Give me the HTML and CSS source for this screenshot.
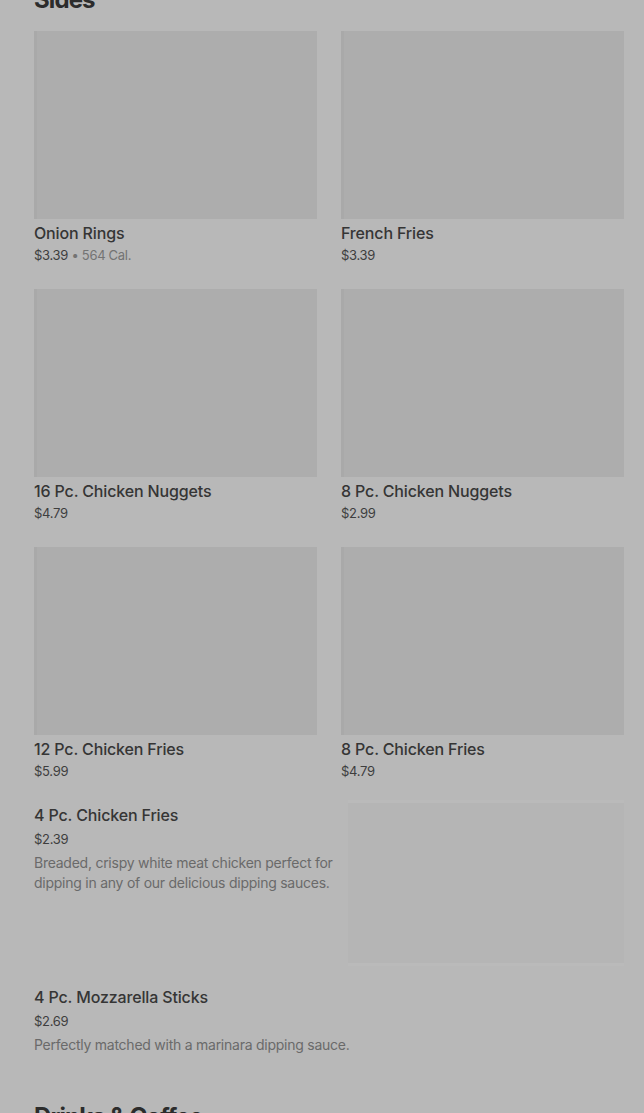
FILE: index.html
```html
<!DOCTYPE html>
<html>
<head>
<meta charset="utf-8">
<link rel="stylesheet" href="styles.css">
</head>
<body>
<main class="menu">
  <h2 class="section-title top">Sides</h2>
  <div class="grid">
    <div class="card">
      <div class="thumb"></div>
      <div class="name">Onion Rings</div>
      <div class="price">$3.39 <span class="cal">• 564 Cal.</span></div>
    </div>
    <div class="card">
      <div class="thumb"></div>
      <div class="name">French Fries</div>
      <div class="price">$3.39</div>
    </div>
    <div class="card">
      <div class="thumb"></div>
      <div class="name">16 Pc. Chicken Nuggets</div>
      <div class="price">$4.79</div>
    </div>
    <div class="card">
      <div class="thumb"></div>
      <div class="name">8 Pc. Chicken Nuggets</div>
      <div class="price">$2.99</div>
    </div>
    <div class="card">
      <div class="thumb"></div>
      <div class="name">12 Pc. Chicken Fries</div>
      <div class="price">$5.99</div>
    </div>
    <div class="card">
      <div class="thumb"></div>
      <div class="name">8 Pc. Chicken Fries</div>
      <div class="price">$4.79</div>
    </div>
  </div>

  <div class="list">
    <div class="row">
      <div class="row-text">
        <div class="name">4 Pc. Chicken Fries</div>
        <div class="price">$2.39</div>
        <div class="desc">Breaded, crispy white meat chicken perfect for dipping in any of our delicious dipping sauces.</div>
      </div>
      <div class="row-thumb"></div>
    </div>
    <div class="row">
      <div class="row-text">
        <div class="name">4 Pc. Mozzarella Sticks</div>
        <div class="price">$2.69</div>
        <div class="desc">Perfectly matched with a marinara dipping sauce.</div>
      </div>
    </div>
  </div>

  <h2 class="section-title">Drinks &amp; Coffee</h2>
</main>
</body>
</html>
```

FILE: styles.css
```css
html, body {
  margin: 0;
  padding: 0;
  background: #b8b8b8;
  overflow: hidden;
}

body {
  font-family: Inter, "Noto Sans", sans-serif;
  color: #333;
}

.menu {
  padding: 0 20px 0 34px;
}

.section-title {
  margin: 0;
  font-size: 24px;
  line-height: 32px;
  font-weight: 700;
  color: #2c2c2c;
  letter-spacing: -0.9px;
}

.section-title.top {
  margin-top: -16px;
  margin-bottom: 15px;
}

.grid {
  display: grid;
  grid-template-columns: 1fr 1fr;
  column-gap: 24px;
  row-gap: 24px;
}

.thumb {
  height: 188px;
  background: #adadad;
  box-shadow: inset 3px 0 0 #a9a9a9;
}

.name {
  font-size: 16px;
  line-height: 24px;
  font-weight: 500;
  color: #353535;
  letter-spacing: -0.15px;
}

.card .name {
  margin-top: 2px;
}

.price {
  font-size: 13px;
  line-height: 20px;
  color: #3e3e3e;
  letter-spacing: -0.3px;
}

.cal {
  color: #737373;
}

.list {
  margin-top: 19px;
  display: flex;
  flex-direction: column;
  gap: 16px;
}

.row {
  display: flex;
  gap: 6px;
}

.row-text {
  flex: 1;
  padding-top: 3px;
}

.row .price {
  margin-top: 2px;
}

.desc {
  margin-top: 4px;
  font-size: 14px;
  line-height: 20px;
  color: #6a6a6a;
  letter-spacing: -0.25px;
}

.row-thumb {
  width: 276px;
  height: 166px;
  flex: none;
  background: #b5b5b5;
  border-top: 3px solid #bababa;
  border-bottom: 3px solid #bababa;
  box-sizing: border-box;
}

.list + .section-title {
  margin-top: 46px;
}
```
